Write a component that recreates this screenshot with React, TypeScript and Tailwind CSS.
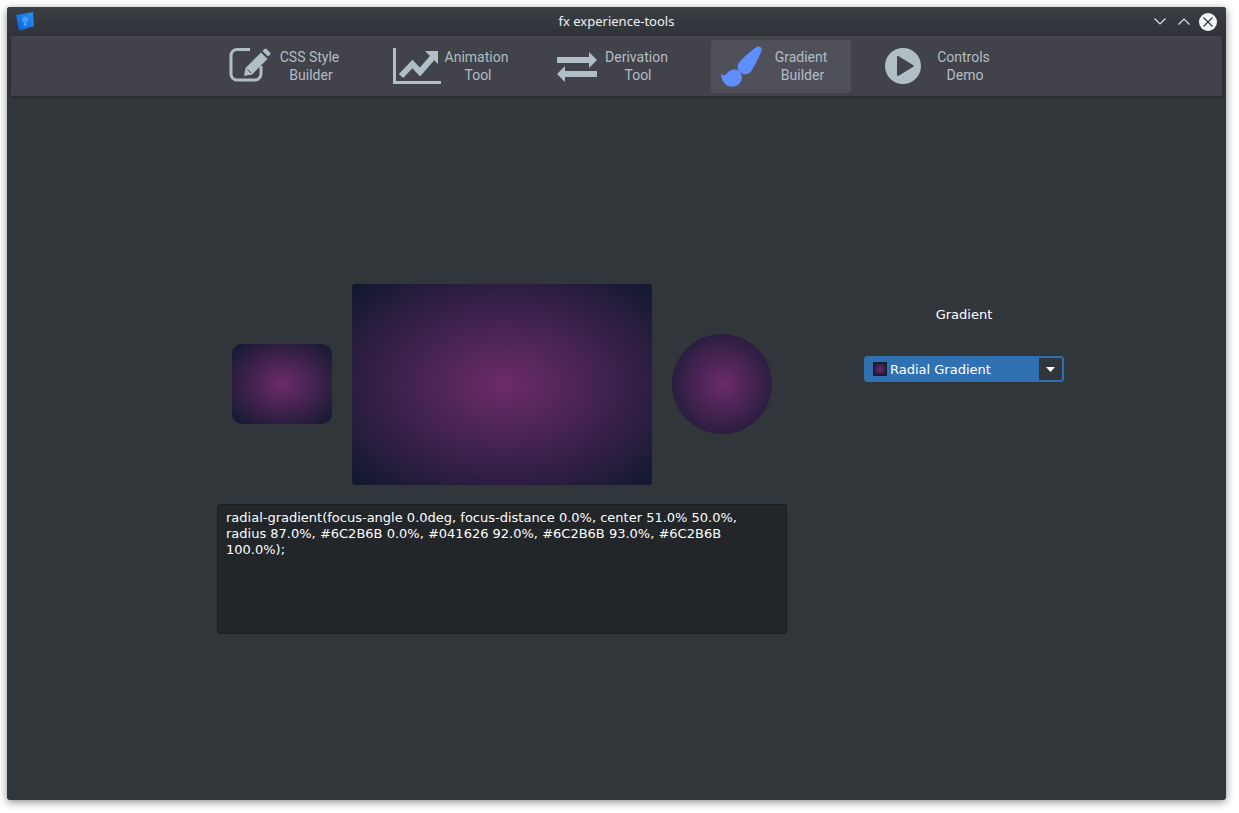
import type { ReactNode } from "react"

const gradient =
  "bg-[radial-gradient(ellipse_87%_87%_at_51%_50%,#6C2B6B_0%,#041626_92%,#6C2B6B_93%,#6C2B6B_100%)]"

function EditIcon() {
  return (
    <svg width="42" height="39" viewBox="0 0 42 39" className="shrink-0">
      <path
        d="M21 2.500H8a6 6 0 0 0-6 6V27a6 6 0 0 0 6 6H26a6 6 0 0 0 6-6V19"
        fill="none"
        stroke="currentColor"
        strokeWidth="3"
      />
      <path d="M15 29l1.500-8L32 5.500 38.500 12 23 27.500z" fill="currentColor" />
      <path d="M33.500 4l2-2a1.500 1.500 0 0 1 2 0l3.500 3.500a1.500 1.500 0 0 1 0 2l-2 2z" fill="currentColor" />
      <path d="M18.500 22.500l3.500 3.500" fill="none" stroke="#42424a" strokeWidth="1" />
    </svg>
  )
}

function ChartIcon() {
  return (
    <svg width="48" height="37" viewBox="0 0 48 37" fill="currentColor" className="shrink-0">
      <path d="M0 0h3v33h45v3H0z" />
      <path d="M8 28l11.500-12 7.500 8 13-15" fill="none" stroke="currentColor" strokeWidth="6" />
      <path d="M32 3h13v13z" />
    </svg>
  )
}

function ExchangeIcon() {
  return (
    <svg width="40" height="31" viewBox="0 -1 40 31" fill="currentColor" className="shrink-0">
      <path d="M0 5h32V0l8 8-8 8v-5H0z" />
      <path d="M40 19v6H8v5l-8-8 8-8v5z" />
    </svg>
  )
}

function BrushIcon() {
  return (
    <svg width="41" height="41" viewBox="0 0 41 41" fill="currentColor" className="shrink-0">
      <path d="M34.500 1.500C37.500 -1 42 1 40.500 5 38 11 33.500 20 30 25.500c-2.500 3.500-7.500 3.500-10.800.8-3-2.500-3.400-6.500-1-9.800C22 11.500 29 6 34.500 1.500z" />
      <path d="M0 27c1.500 3 4 3 6 .5 2.500-3.500 8-5.500 12-2.500 3.500 3 4 8.500.8 12-3.800 4.500-10 4.800-14 1.500C1.500 36 0 31.500 0 27z" />
    </svg>
  )
}

function PlayIcon() {
  return (
    <svg width="38" height="37" viewBox="0 0 38 37" className="shrink-0">
      <circle cx="18" cy="18" r="18" fill="currentColor" />
      <path
        d="M12 9.500C12 8 13 7.800 14 8.500L28 17c1 .6 1 1.400 0 2L14 27.500c-1 .7-2 .5-2-1z"
        fill="#42424a"
      />
    </svg>
  )
}

function ToolButton({
  icon,
  top,
  bottom,
  active,
}: {
  icon: ReactNode
  top: string
  bottom: string
  active?: boolean
}) {
  return (
    <div
      className={
        active
          ? "flex h-[53px] w-[140px] items-center rounded-[3px] bg-[#50505a] pl-[10px] text-[#5f8fff]"
          : "flex h-[53px] w-[140px] items-center rounded-[3px] pl-[10px] text-[#b0bec5]"
      }
    >
      {icon}
      <div className="flex-1 pr-[10px] text-center font-['Roboto',sans-serif] text-[14px] leading-[18px] text-[#b0bec5]">
        <div>{top}</div>
        <div className="pl-[3px]">{bottom}</div>
      </div>
    </div>
  )
}

function Logo() {
  return (
    <svg width="19" height="19" viewBox="0 0 19 19" className="shrink-0">
      <defs>
        <linearGradient id="logo" x1="0" y1="1" x2="1" y2="0">
          <stop offset="0" stopColor="#0b62e2" />
          <stop offset="1" stopColor="#2a8fee" />
        </linearGradient>
      </defs>
      <path d="M0 3 17 0 18 14.500 11 16 10 17 3 18.500Z" fill="url(#logo)" />
      <circle cx="9" cy="7.500" r="3" fill="#3f9df2" />
      <rect x="7.700" y="10.500" width="2.800" height="3.500" rx="1" fill="#4aa6f3" />
    </svg>
  )
}

function WindowButtons() {
  return (
    <div className="flex items-center justify-end">
      <svg width="12" height="7" viewBox="0 0 12 7" fill="none" stroke="#e4e6e8" strokeWidth="1.100">
        <path d="M.5.5 6 6l5.500-5.500" />
      </svg>
      <svg width="12" height="7" viewBox="0 0 12 7" fill="none" stroke="#e4e6e8" strokeWidth="1.100" className="ml-3">
        <path d="M.5 6.500 6 1l5.500 5.500" />
      </svg>
      <div className="ml-[9px] flex h-[18px] w-[18px] items-center justify-center rounded-full bg-[#f2f3f4]">
        <svg width="10" height="10" viewBox="0 0 10 10" stroke="#31363b" strokeWidth="1.200">
          <path d="M.5.5l9 9M9.500.5l-9 9" />
        </svg>
      </div>
    </div>
  )
}

export default function App() {
  return (
    <div className="h-[813px] w-[1239px] overflow-hidden bg-white pl-[7px] pt-[7px]">
      <div className="flex h-[793px] w-[1219px] flex-col rounded-[3px] bg-[#31363b] shadow-[0_2px_8px_rgba(0,0,0,0.45)]">
        {/* Title bar */}
        <div className="grid h-[29px] shrink-0 grid-cols-[1fr_auto_1fr] items-center rounded-t-[3px] bg-gradient-to-b from-[#3b3f45] to-[#2f3338] px-[9px]">
          <Logo />
          <span className="font-['Noto_Sans',sans-serif] text-[13px] text-[#eff0f1]">fx experience-tools</span>
          <WindowButtons />
        </div>

        {/* Toolbar */}
        <div className="mx-[4px] flex h-[60px] shrink-0 items-center justify-center gap-6 bg-[#42424a] shadow-[0_1px_2px_rgba(0,0,0,0.3)]">
          <ToolButton icon={<EditIcon />} top="CSS Style" bottom="Builder" />
          <ToolButton icon={<ChartIcon />} top="Animation" bottom="Tool" />
          <ToolButton icon={<ExchangeIcon />} top="Derivation" bottom="Tool" />
          <ToolButton icon={<BrushIcon />} top="Gradient" bottom="Builder" active />
          <ToolButton icon={<PlayIcon />} top="Controls" bottom="Demo" />
        </div>

        {/* Content */}
        <div className="flex flex-1 pl-[210px] pt-[188px] font-['DejaVu_Sans',sans-serif] text-[13px] text-white">
          <div className="w-[570px]">
            <div className="flex items-center justify-center gap-5">
              <div className={`mb-[1px] h-[80px] w-[100px] rounded-[10px] ${gradient}`} />
              <div className={`h-[201px] w-[300px] rounded-[3px] ${gradient}`} />
              <div className={`mb-[1px] h-[100px] w-[100px] rounded-full ${gradient}`} />
            </div>
            <div className="mt-[19px] h-[130px] rounded-[3px] border border-[#1b1e20] bg-[#232629] px-[8px] py-[5px] leading-[16px]">
              radial-gradient(focus-angle 0.0deg, focus-distance 0.0%, center 51.0% 50.0%, radius 87.0%, #6C2B6B 0.0%,
              #041626 92.0%, #6C2B6B 93.0%, #6C2B6B 100.0%);
            </div>
          </div>

          <div className="ml-[77px] w-[200px] pt-[22px]">
            <div className="text-center leading-[18px]">Gradient</div>
            <div className="mt-[32px] flex h-[26px] items-center rounded-[3px] border border-[#2f6ea8] bg-[#3071b3] pl-[8px]">
              <div className={`h-[14px] w-[14px] border border-[#101a30] ${gradient}`} />
              <span className="ml-[3px] flex-1 pt-[1px]">Radial Gradient</span>
              <div className="flex h-[24px] w-[25px] items-center justify-center rounded-r-[2px] border border-[#3071b3] bg-[#31363b]">
                <svg width="9" height="5" viewBox="0 0 9 5" fill="#fff">
                  <path d="M0 0h9L4.500 5z" />
                </svg>
              </div>
            </div>
          </div>
        </div>
      </div>
    </div>
  )
}
